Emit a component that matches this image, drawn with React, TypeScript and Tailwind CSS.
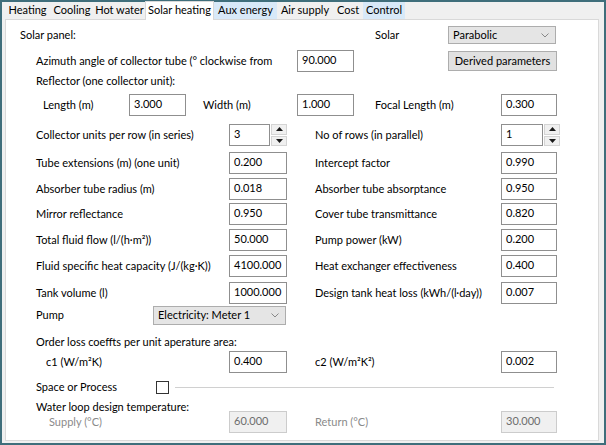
import React from "react";

const font = { fontFamily: "Lato, 'Noto Sans', sans-serif" };

function Field({ value, w = "w-[58px]", disabled = false }: { value: string; w?: string; disabled?: boolean }) {
	return (
		<div
			className={`${w} h-[22px] shrink-0 border pl-[4px] pt-[2px] leading-[14px] ${
				disabled ? "bg-[#f0f0f0] border-[#cccccc] text-[#6d6d6d]" : "bg-white border-[#8f8f8f] text-black"
			}`}
		>
			{value}
		</div>
	);
}

function Arrow({ up }: { up?: boolean }) {
	return (
		<div className="flex flex-1 items-center justify-center border border-[#d4d4d4] bg-[#f0f0f0]">
			<svg width="7" height="4" viewBox="0 0 7 4" fill="#1a1a1a">
				<path d={up ? "M3.5 0 L7 4 L0 4 Z" : "M0 0 L7 0 L3.5 4 Z"} />
			</svg>
		</div>
	);
}

function Spinner({ value, w }: { value: string; w: string }) {
	return (
		<div className="flex h-[22px] shrink-0 items-stretch">
			<div className={`${w} border border-[#8f8f8f] bg-white pl-[4px] pt-[2px] leading-[14px]`}>{value}</div>
			<div className="ml-[1px] flex w-[16px] flex-col gap-[1px]">
				<Arrow up />
				<Arrow />
			</div>
		</div>
	);
}

function Dropdown({ value, w, h = "h-[18px]" }: { value: string; w: string; h?: string }) {
	return (
		<div className={`${w} ${h} flex shrink-0 items-center justify-between border border-[#adadad] bg-[#e5e5e5] pl-[4px] pr-[6px]`}>
			<span>{value}</span>
			<svg width="8" height="5" viewBox="0 0 8 5" fill="none" stroke="#888" strokeWidth="1">
				<path d="M0.5 0.5 L4 4 L7.5 0.5" />
			</svg>
		</div>
	);
}

function Pair({
	left,
	leftValue,
	right,
	rightValue,
	mt,
	leftSpin = false,
	rightSpin = false,
	disabled = false,
	leftIndent = "",
	rightIndent = "",
}: {
	left: string;
	leftValue: string;
	right: string;
	rightValue: string;
	mt: string;
	leftSpin?: boolean;
	rightSpin?: boolean;
	disabled?: boolean;
	leftIndent?: string;
	rightIndent?: string;
}) {
	const labelColor = disabled ? "text-[#8a8a8a]" : "";
	return (
		<div className={`${mt} flex h-[22px] items-center pl-[30px]`}>
			<span className={`w-[193px] shrink-0 whitespace-nowrap ${leftIndent} ${labelColor}`}>{left}</span>
			{leftSpin ? <Spinner value={leftValue} w="w-[41px]" /> : <Field value={leftValue} disabled={disabled} />}
			<span className={`ml-[28px] w-[186px] shrink-0 whitespace-nowrap ${rightIndent} ${labelColor}`}>{right}</span>
			{rightSpin ? (
				<Spinner value={rightValue} w="w-[42px]" />
			) : (
				<Field value={rightValue} w="w-[56px]" disabled={disabled} />
			)}
		</div>
	);
}

const tabs = [
	{ name: "Heating", w: "w-[45px]" },
	{ name: "Cooling", w: "w-[44px]" },
	{ name: "Hot water", w: "w-[51px]" },
	{ name: "Solar heating", w: "w-[69px]", active: true },
	{ name: "Aux energy", w: "w-[63px]", hover: true },
	{ name: "Air supply", w: "w-[56px]" },
	{ name: "Cost", w: "w-[30px]" },
	{ name: "Control", w: "w-[42px]", hover: true },
];

export default function App() {
	return (
		<div
			className="flex h-[445px] w-[606px] flex-col border-2 border-[#3f6e7b] bg-[#f0f0f0] text-[11px] text-black"
			style={font}
		>
			{/* Tabs */}
			<div className="flex h-[17px] items-end pl-[3px]">
				{tabs.map((t) =>
					t.active ? (
						<div
							key={t.name}
							className={`${t.w} relative z-10 -mb-[1px] flex h-[19px] items-center justify-center whitespace-nowrap border border-b-0 border-[#d9d9d9] bg-white pb-[2px]`}
						>
							{t.name}
						</div>
					) : (
						<div
							key={t.name}
							className={`${t.w} flex h-[17px] items-center justify-center whitespace-nowrap ${t.hover ? "bg-[#d8e9f8]" : ""}`}
						>
							{t.name}
						</div>
					),
				)}
			</div>

			{/* Panel */}
			<div className="ml-[3px] h-[422px] w-[594px] border border-[#d9d9d9] bg-white">
				<div className="mt-[6px] flex h-[18px] items-center pl-[14px]">
					<span className="w-[355px] shrink-0">Solar panel:</span>
					<span className="w-[73px] shrink-0">Solar</span>
					<Dropdown value="Parabolic" w="w-[108px]" />
				</div>

				<div className="mt-[6px] flex h-[22px] items-center pl-[30px]">
					<span className="w-[261px] shrink-0 whitespace-nowrap">Azimuth angle of collector tube (° clockwise from</span>
					<Field value="90.000" w="w-[57px]" />
					<div className="ml-[94px] flex h-[20px] w-[109px] items-center justify-center border border-[#adadad] bg-[#e1e1e1]">
						Derived parameters
					</div>
				</div>

				<div className="mt-[1px] flex h-[16px] items-center pl-[30px]">Reflector (one collector unit):</div>

				<div className="mt-[5px] flex h-[22px] items-center pl-[37px]">
					<span className="w-[86px] shrink-0">Length (m)</span>
					<Field value="3.000" w="w-[57px]" />
					<span className="ml-[17px] w-[94px] shrink-0">Width (m)</span>
					<Field value="1.000" w="w-[57px]" />
					<span className="ml-[21px] w-[126px] shrink-0">Focal Length (m)</span>
					<Field value="0.300" w="w-[56px]" />
				</div>

				<Pair mt="mt-[8px]" left="Collector units per row (in series)" leftValue="3" leftSpin right="No of rows (in parallel)" rightValue="1" rightSpin />
				<Pair mt="mt-[6px]" left="Tube extensions (m) (one unit)" leftValue="0.200" right="Intercept factor" rightValue="0.990" />
				<Pair mt="mt-[4px]" left="Absorber tube radius (m)" leftValue="0.018" right="Absorber tube absorptance" rightValue="0.950" />
				<Pair mt="mt-[3px]" left="Mirror reflectance" leftValue="0.950" right="Cover tube transmittance" rightValue="0.820" />
				<Pair mt="mt-[4px]" left="Total fluid flow (l/(h·m²))" leftValue="50.000" right="Pump power (kW)" rightValue="0.200" />
				<Pair mt="mt-[4px]" left="Fluid specific heat capacity (J/(kg·K))" leftValue="4100.000" right="Heat exchanger effectiveness" rightValue="0.400" />
				<Pair mt="mt-[5px]" left="Tank volume (l)" leftValue="1000.000" right="Design tank heat loss (kWh/(l·day))" rightValue="0.007" />

				<div className="mt-[2px] flex h-[19px] items-center pl-[30px]">
					<span className="w-[117px] shrink-0">Pump</span>
					<Dropdown value="Electricity: Meter 1" w="w-[133px]" h="h-[19px]" />
				</div>

				<div className="mt-[9px] flex h-[16px] items-center pl-[30px]">Order loss coeffts per unit aperature area:</div>

				<Pair mt="mt-[1px]" left="c1 (W/m²K)" leftIndent="pl-[10px]" leftValue="0.400" right="c2 (W/m²K²)" rightValue="0.002" />

				<div className="mt-[8px] flex h-[13px] items-center pl-[30px]">
					<span className="w-[120px] shrink-0">Space or Process</span>
					<div className="h-[13px] w-[13px] shrink-0 border border-[#333] bg-white" />
					<div className="ml-[6px] mr-[44px] h-px flex-1 bg-[#d0d0d0]" />
				</div>

				<div className="mt-[5px] flex h-[16px] items-center pl-[30px]">Water loop design temperature:</div>

				<Pair mt="-mt-[4px]" disabled left="Supply (°C)" leftIndent="pl-[13px]" leftValue="60.000" right="Return (°C)" rightIndent="-ml-[2px]" rightValue="30.000" />
			</div>
		</div>
	);
}
